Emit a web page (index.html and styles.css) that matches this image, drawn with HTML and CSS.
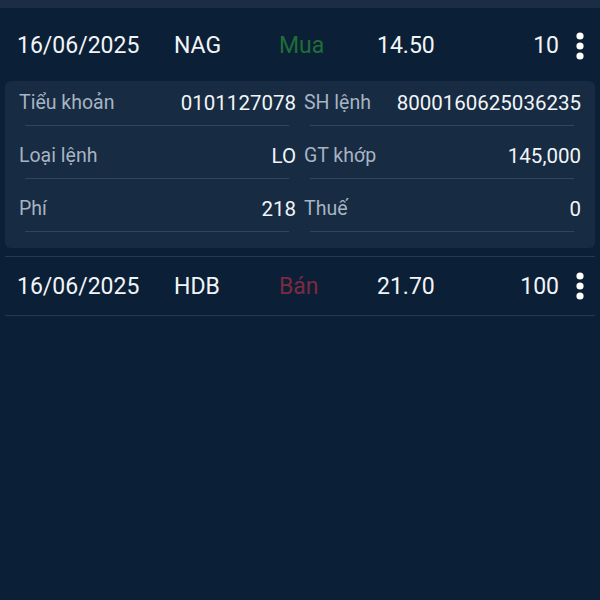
FILE: index.html
```html
<!DOCTYPE html>
<html lang="vi">
<head>
  <meta charset="UTF-8" />
  <meta name="viewport" content="width=device-width, initial-scale=1.0" />
  <title>Sổ lệnh</title>
  <link rel="stylesheet" href="styles.css">
</head>
<body>
  <div class="top-strip"></div>

  <div class="order order-first">
    <span class="date">16/06/2025</span>
    <span class="symbol">NAG</span>
    <span class="side buy">Mua</span>
    <span class="price">14.50</span>
    <span class="qty">10</span>
    <span class="more">
      <svg width="8" height="28" viewBox="0 0 8 28"><circle cx="4" cy="4" r="3.6" fill="#fff"/><circle cx="4" cy="14" r="3.6" fill="#fff"/><circle cx="4" cy="24" r="3.6" fill="#fff"/></svg>
    </span>
  </div>

  <div class="detail">
    <div class="cell">
      <div class="kv"><span class="label">Tiểu khoản</span><span class="value">0101127078</span></div>
      <div class="rule"></div>
    </div>
    <div class="cell">
      <div class="kv"><span class="label">SH lệnh</span><span class="value">8000160625036235</span></div>
      <div class="rule"></div>
    </div>
    <div class="cell">
      <div class="kv"><span class="label">Loại lệnh</span><span class="value">LO</span></div>
      <div class="rule"></div>
    </div>
    <div class="cell">
      <div class="kv"><span class="label">GT khớp</span><span class="value">145,000</span></div>
      <div class="rule"></div>
    </div>
    <div class="cell">
      <div class="kv"><span class="label">Phí</span><span class="value">218</span></div>
      <div class="rule"></div>
    </div>
    <div class="cell">
      <div class="kv"><span class="label">Thuế</span><span class="value">0</span></div>
      <div class="rule"></div>
    </div>
  </div>

  <div class="order order-second">
    <span class="date">16/06/2025</span>
    <span class="symbol">HDB</span>
    <span class="side sell">Bán</span>
    <span class="price">21.70</span>
    <span class="qty">100</span>
    <span class="more">
      <svg width="8" height="28" viewBox="0 0 8 28"><circle cx="4" cy="4" r="3.6" fill="#fff"/><circle cx="4" cy="14" r="3.6" fill="#fff"/><circle cx="4" cy="24" r="3.6" fill="#fff"/></svg>
    </span>
  </div>
</body>
</html>
```

FILE: styles.css
```css
body {
  margin: 0;
  height: 600px;
  overflow: hidden;
  background: #0b1f36;
  font-family: Roboto, "Noto Sans", sans-serif;
  color: #f2f5f8;
}
.top-strip {
  height: 8px;
  background: #1a2d44;
}
.order {
  display: grid;
  grid-template-columns: 157px 105px 98px 1fr auto 36px;
  align-items: center;
  margin: 0 5px;
  padding-left: 12px;
  font-size: 23px;
}
.order-first {
  height: 73px;
  padding-top: 2px;
  box-sizing: border-box;
}
.order-second {
  height: 58px;
  border-top: 1px solid #243a52;
  border-bottom: 1px solid #243a52;
}
.side.buy {
  color: #1f6e37;
}
.side.sell {
  color: #7c2a41;
}
.qty {
  text-align: right;
}
.more {
  display: flex;
  justify-content: center;
  padding-left: 6px;
}
.more svg {
  display: block;
}
.detail {
  display: grid;
  grid-template-columns: 1fr 1fr;
  column-gap: 8px;
  row-gap: 8px;
  margin: 0 5px 8px;
  padding: 0 14px 16px;
  background: #172b42;
  border-radius: 6px;
}
.kv {
  display: flex;
  justify-content: space-between;
  line-height: 44px;
}
.label {
  font-size: 19.5px;
  color: #a7b4c3;
}
.value {
  font-size: 20.5px;
  color: #f2f5f8;
}
.rule {
  height: 1px;
  margin: 0 7px 0 6px;
  background: #2f465e;
}
```
